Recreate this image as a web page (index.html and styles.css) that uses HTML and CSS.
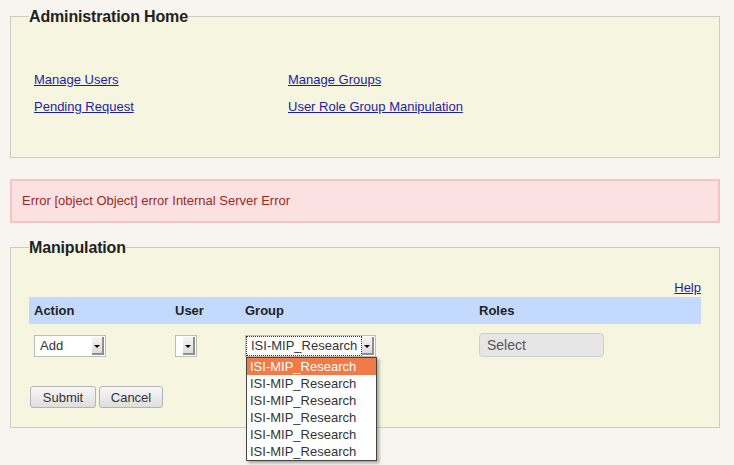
FILE: index.html
```html
<!DOCTYPE html>
<html lang="en">
<head>
  <meta charset="UTF-8">
  <title>Administration Home</title>
  <link rel="stylesheet" href="styles.css">
</head>
<body>
  <div class="page">
    <div class="box">
      <h2 class="legend">Administration Home</h2>
      <div class="links">
        <a href="#">Manage Users</a>
        <a href="#">Manage Groups</a>
        <a href="#">Pending Request</a>
        <a href="#">User Role Group Manipulation</a>
      </div>
    </div>

    <div class="error">Error [object Object] error Internal Server Error</div>

    <div class="box manip">
      <h2 class="legend">Manipulation</h2>
      <div class="help"><a href="#">Help</a></div>
      <div class="grid">
        <div class="head">Action</div>
        <div class="head">User</div>
        <div class="head">Group</div>
        <div class="head">Roles</div>

        <div class="cell">
          <div class="select action"><span class="value">Add</span><span class="arrow"></span></div>
        </div>
        <div class="cell">
          <div class="select user"><span class="value"></span><span class="arrow"></span></div>
        </div>
        <div class="cell group-cell">
          <div class="select group"><span class="value focus">ISI-MIP_Research</span><span class="arrow"></span></div>
          <ul class="options">
            <li class="active">ISI-MIP_Research</li>
            <li>ISI-MIP_Research</li>
            <li>ISI-MIP_Research</li>
            <li>ISI-MIP_Research</li>
            <li>ISI-MIP_Research</li>
            <li>ISI-MIP_Research</li>
          </ul>
        </div>
        <div class="cell">
          <button class="roles">Select</button>
        </div>
      </div>
      <div class="actions">
        <button class="btn submit">Submit</button>
        <button class="btn cancel">Cancel</button>
      </div>
    </div>
  </div>
</body>
</html>
```

FILE: styles.css
```css
* {
  margin: 0;
  padding: 0;
  box-sizing: border-box;
}
:root {
  --page: #f8f5f0;
  --panel: #f6f5e0;
}
html,
body {
  min-height: 100%;
  height: 100%;
}
body {
  background-color: var(--page);
  font-family: "Liberation Sans", Arial, sans-serif;
  font-size: 13px;
  color: #222;
}
.page {
  padding: 16px 14px 0 10px;
}
/* 带标题的区块，标题压在上边框上 */
.box {
  border: 1px solid #cccbc6;
  background-color: var(--panel);
  padding: 0 18px;
}
.legend {
  display: block;
  width: fit-content;
  margin-top: -9px;
  font-size: 16px;
  line-height: 18px;
  font-weight: bold;
  letter-spacing: -0.15px;
  color: #222;
  background: linear-gradient(var(--page) 9px, var(--panel) 9px);
}
.links {
  display: grid;
  grid-template-columns: 254px auto;
  row-gap: 12px;
  padding: 46px 0 43px 5px;
  line-height: 15px;
}
.links a,
.help a {
  color: #1c1ca6;
}
.links a {
  justify-self: start;
}
/* 错误提示 */
.error {
  margin-top: 21px;
  background-color: #fbe1e1;
  border: 2px solid #f6c3c3;
  color: #9a2a1e;
  line-height: 15px;
  padding: 12px 10px 13px;
}
.manip {
  margin-top: 24px;
}
.help {
  text-align: right;
  line-height: 15px;
  padding-top: 23px;
  margin-bottom: 2px;
}
.grid {
  display: grid;
  grid-template-columns: 141px 70px 234px auto;
}
.head {
  background-color: #c3d9fd;
  font-weight: bold;
  line-height: 27px;
  padding-left: 5px;
}
.cell {
  padding: 11px 0 0 5px;
  height: 58px;
}
/* 仿老式下拉框 */
.select {
  display: flex;
  height: 22px;
  background: #fff;
  border: 1px solid #bdbcb6;
  padding: 1px;
}
.select .value {
  flex: 1;
  line-height: 18px;
  padding-left: 4px;
  color: #333;
  font-size: 13px;
}
.select .arrow {
  position: relative;
  width: 12px;
  background: linear-gradient(#f4f4f4, #dcdcdc);
  border-right: 2px solid #8e8e8e;
  border-bottom: 2px solid #8e8e8e;
}
.select .arrow::after {
  content: '';
  position: absolute;
  left: 2px;
  top: 8px;
  border-left: 3px solid transparent;
  border-right: 3px solid transparent;
  border-top: 3px solid #000;
}
.select.action {
  width: 72px;
}
.select.user {
  width: 22px;
}
.select.group {
  width: 131px;
}
.select .focus {
  outline: 1px dotted #333;
  margin-right: 1px;
}
.group-cell {
  position: relative;
}
/* 展开的选项列表 */
.options {
  position: absolute;
  left: 6px;
  top: 33px;
  width: 131px;
  list-style: none;
  background: #fff;
  border: 1px solid #444;
  box-shadow: 2px 2px 3px rgba(0, 0, 0, 0.35);
  z-index: 5;
}
.options li {
  line-height: 17px;
  padding-left: 3px;
  color: #333;
}
.options li.active {
  background-color: #f07a48;
  color: #fff;
}
.roles {
  width: 125px;
  height: 24px;
  margin-top: -2px;
  background: #e6e6e6;
  border: 1px solid #cfcfcf;
  border-radius: 4px;
  font-family: inherit;
  font-size: 14px;
  color: #555;
  text-align: left;
  padding-left: 7px;
}
.actions {
  display: flex;
  gap: 3px;
  padding: 4px 0 19px 1px;
}
.btn {
  height: 22px;
  background: linear-gradient(#f7f7f7, #dedede);
  border: 1px solid #b4b4b4;
  border-radius: 3px;
  font-family: inherit;
  font-size: 13px;
  color: #333;
}
.submit {
  width: 66px;
}
.cancel {
  width: 64px;
}
```
